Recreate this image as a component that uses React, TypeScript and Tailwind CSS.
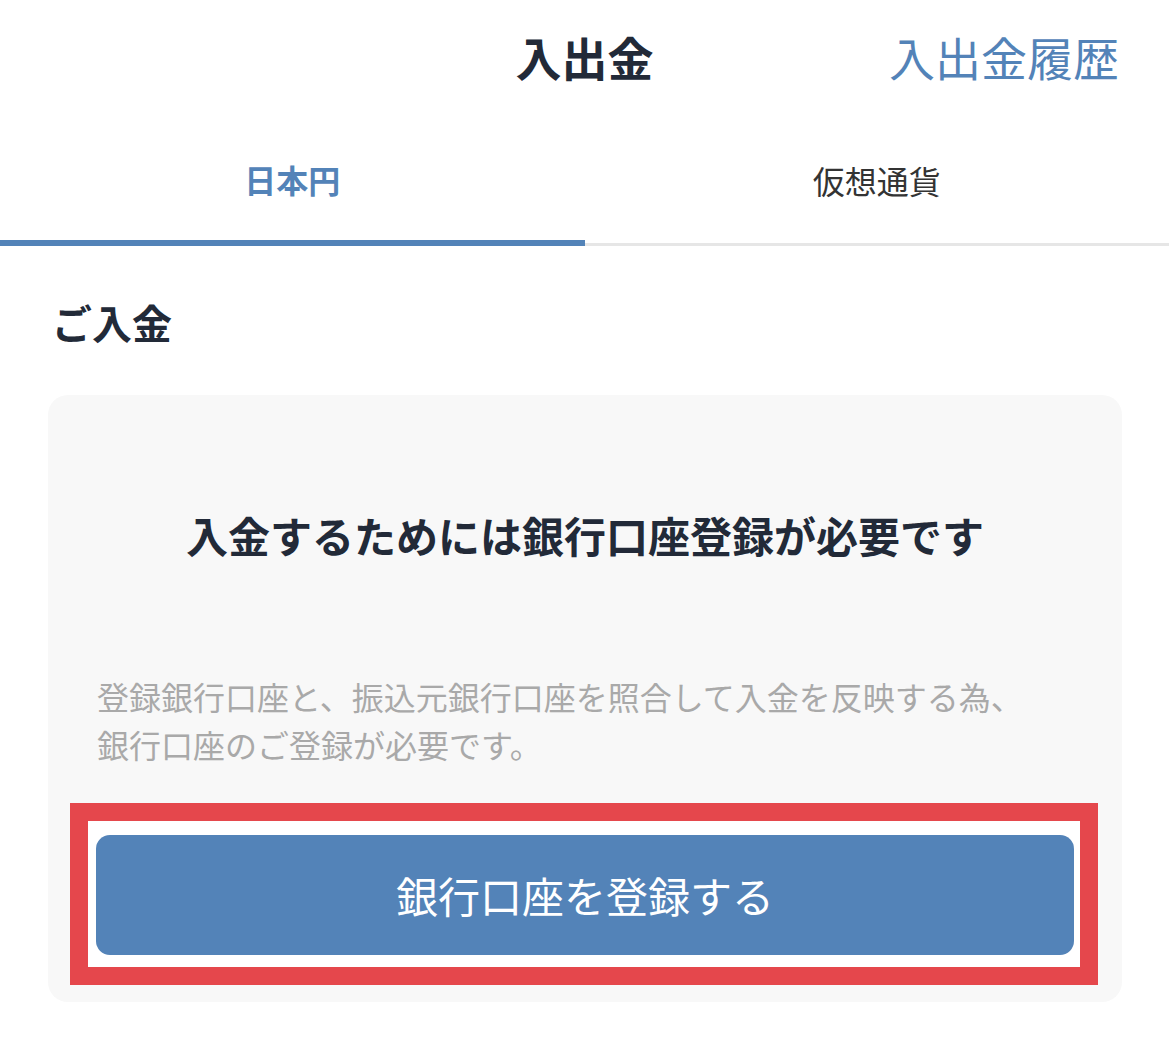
export default function App() {
  return (
    <div className="w-[1169px] min-h-[1046px] bg-white font-['Noto_Sans_CJK_JP','Noto_Sans',sans-serif] text-[#222a38]">
      <header className="grid grid-cols-[1fr_auto_1fr] items-center h-[120px] pb-[8px]">
        <div />
        <h1 className="text-[46px] font-bold leading-none">入出金</h1>
        <div className="flex justify-end pr-[50px]">
          <span className="text-[46px] leading-none text-[#5383b8]">入出金履歴</span>
        </div>
      </header>
      <nav className="flex border-b-[3px] border-[#e6e6e6]">
        <div className="flex-1 h-[126px] flex items-center justify-center border-b-[6px] border-[#5383b8] -mb-[3px] pb-[2px]">
          <span className="text-[32px] font-bold text-[#5383b8] leading-none">日本円</span>
        </div>
        <div className="flex-1 h-[123px] flex items-center justify-center pb-[4px]">
          <span className="text-[32px] text-[#333] leading-none">仮想通貨</span>
        </div>
      </nav>
      <section className="pt-[52px]">
        <h2 className="pl-[52px] text-[40px] font-bold leading-[48px]">ご入金</h2>
        <div className="mt-[49px] mx-[48px] w-[1074px] rounded-[20px] bg-[#f8f8f8] pt-[110px] pb-[17px]">
          <p className="text-center text-[42px] font-bold leading-[60px]">入金するためには銀行口座登録が必要です</p>
          <p className="mt-[107px] px-[49px] text-[32px] leading-[48px] text-[#a9a9a9]">
            登録銀行口座と、振込元銀行口座を照合して入金を反映する為、
            <br />
            銀行口座のご登録が必要です。
          </p>
          <div className="mt-[35px] ml-[22px] w-[1028px] border-[18px] border-[#e5474c] bg-white pt-[14px] pb-[12px] pl-[8px] pr-[6px]">
            <button className="w-full h-[120px] rounded-[14px] bg-[#5383b8] text-white text-[42px] leading-none flex items-center justify-center">
              銀行口座を登録する
            </button>
          </div>
        </div>
      </section>
    </div>
  );
}
